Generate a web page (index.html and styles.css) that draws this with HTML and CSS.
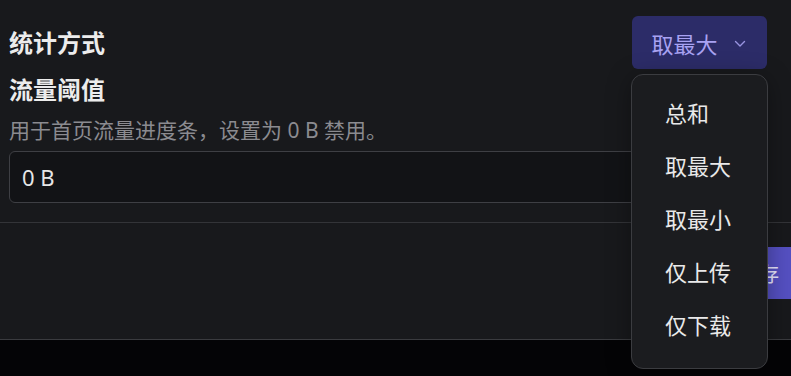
FILE: index.html
```html
<!DOCTYPE html>
<html lang="zh-CN">
<head>
<meta charset="utf-8">
<title>设置</title>
<link rel="stylesheet" href="styles.css">
</head>
<body>
<div class="card">
  <div class="body">
    <div class="row">
      <div class="title">统计方式</div>
      <button class="select">
        <span>取最大</span>
        <svg class="chev" width="12" height="8" viewBox="0 0 12 8"><path d="M1.5 1.5 L6 6 L10.5 1.5" fill="none" stroke="currentColor" stroke-width="1.4" stroke-linecap="round" stroke-linejoin="round"/></svg>
      </button>
    </div>
    <div class="title field-title">流量阈值</div>
    <div class="desc">用于首页流量进度条，设置为 0 B 禁用。</div>
    <div class="input">0 B</div>
  </div>
  <div class="footer">
    <button class="save">保存</button>
  </div>
</div>
<ul class="menu">
  <li>总和</li>
  <li>取最大</li>
  <li>取最小</li>
  <li>仅上传</li>
  <li>仅下载</li>
</ul>
</body>
</html>
```

FILE: styles.css
```css
html, body {
  margin: 0;
  padding: 0;
  background: #040406;
  overflow: hidden;
  height: 376px;
}
body {
  font-family: "Noto Sans", "Noto Sans CJK SC", sans-serif;
  color: #e8e8e8;
  position: relative;
}
.card {
  background: #18191c;
  border-bottom: 1px solid #3a3b3f;
}
.body {
  padding: 16px 24px 19px 9px;
  border-bottom: 1px solid #333438;
}
.row {
  display: flex;
  align-items: center;
  justify-content: space-between;
  height: 53px;
}
.title {
  font-size: 24px;
  font-weight: 700;
  line-height: 30px;
  color: #ececec;
}
.field-title {
  margin-top: 6px;
}
.select {
  width: 135px;
  height: 53px;
  border: none;
  border-radius: 6px;
  background: #2c2c68;
  color: #a8a2f2;
  font-family: inherit;
  font-size: 22px;
  display: flex;
  align-items: center;
  justify-content: center;
  gap: 16px;
  padding: 0 2px 0 0;
}
.chev {
  color: #9893e0;
  margin-top: 2px;
}
.desc {
  margin-top: 11px;
  font-size: 21px;
  line-height: 28px;
  color: #8b8b90;
}
.input {
  margin-top: 7px;
  height: 50px;
  border: 1px solid #3e3f44;
  border-radius: 6px;
  background: #121316;
  font-size: 22px;
  line-height: 50px;
  padding-left: 12px;
  color: #e6e6e6;
}
.footer {
  display: flex;
  justify-content: flex-end;
  padding: 24px 0 40px;
}
.save {
  height: 52px;
  margin-right: -8px;
  padding: 0 20px;
  border: none;
  border-radius: 6px;
  background: #5550c2;
  color: #e8e6ff;
  font-family: inherit;
  font-size: 20px;
}
.menu {
  position: absolute;
  left: 631px;
  top: 74px;
  width: 135px;
  margin: 0;
  padding: 12px 0 16px;
  list-style: none;
  background: #1b1c1f;
  border: 1px solid #3b3c40;
  border-radius: 12px;
  box-shadow: 0 4px 24px rgba(0, 0, 0, 0.35);
}
.menu li {
  height: 53px;
  line-height: 53px;
  padding-left: 33px;
  font-size: 22px;
  color: #e9e9e9;
}
```
